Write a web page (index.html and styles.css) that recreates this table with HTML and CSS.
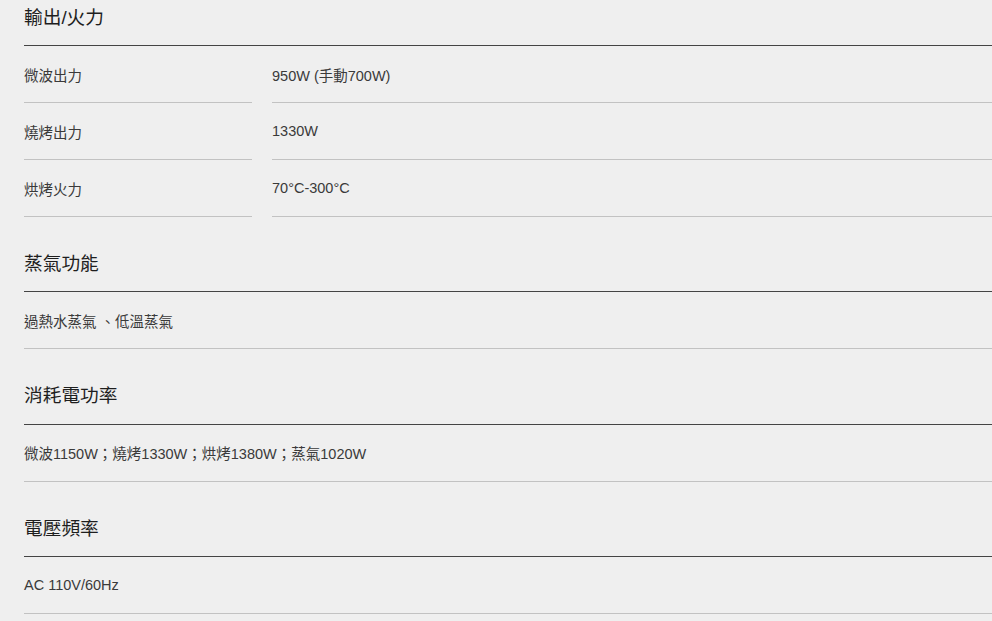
FILE: index.html
```html
<!DOCTYPE html>
<html lang="zh-Hant">
<head>
<meta charset="utf-8">
<link rel="stylesheet" href="styles.css">
</head>
<body>
<div class="specs">
  <section class="group">
    <h3 class="group-title">輸出/火力</h3>
    <div class="row">
      <div class="cell label">微波出力</div>
      <div class="cell value">950W (手動700W)</div>
    </div>
    <div class="row">
      <div class="cell label">燒烤出力</div>
      <div class="cell value">1330W</div>
    </div>
    <div class="row">
      <div class="cell label">烘烤火力</div>
      <div class="cell value">70°C-300°C</div>
    </div>
  </section>
  <section class="group">
    <h3 class="group-title">蒸氣功能</h3>
    <div class="row single">
      <div class="cell full">過熱水蒸氣 、低溫蒸氣</div>
    </div>
  </section>
  <section class="group">
    <h3 class="group-title">消耗電功率</h3>
    <div class="row single">
      <div class="cell full">微波1150W；燒烤1330W；烘烤1380W；蒸氣1020W</div>
    </div>
  </section>
  <section class="group">
    <h3 class="group-title">電壓頻率</h3>
    <div class="row single">
      <div class="cell full">AC 110V/60Hz</div>
    </div>
  </section>
</div>
</body>
</html>
```
FILE: styles.css
```css
html, body {
  margin: 0;
  padding: 0;
  background: #efefef;
}
body {
  font-family: "Liberation Sans", "Noto Sans CJK TC", sans-serif;
  color: #333;
  overflow: hidden;
}
.specs {
  margin-top: -29.4px;
  padding-left: 24px;
}
.group-title {
  margin: 0;
  font-size: 18.72px;
  font-weight: 400;
  line-height: 26px;
  color: #1e1e1e;
  padding: 34px 0 14.4px;
  border-bottom: 1px solid #444;
}
.row {
  display: flex;
  gap: 20px;
}
.cell {
  height: 56px;
  display: flex;
  align-items: center;
  font-size: 14.5px;
  color: #3a3a3a;
  border-bottom: 1px solid #c2c2c2;
}
.label {
  width: 228px;
  flex: none;
}
.value {
  flex: 1;
}
.full {
  flex: 1;
}
```
